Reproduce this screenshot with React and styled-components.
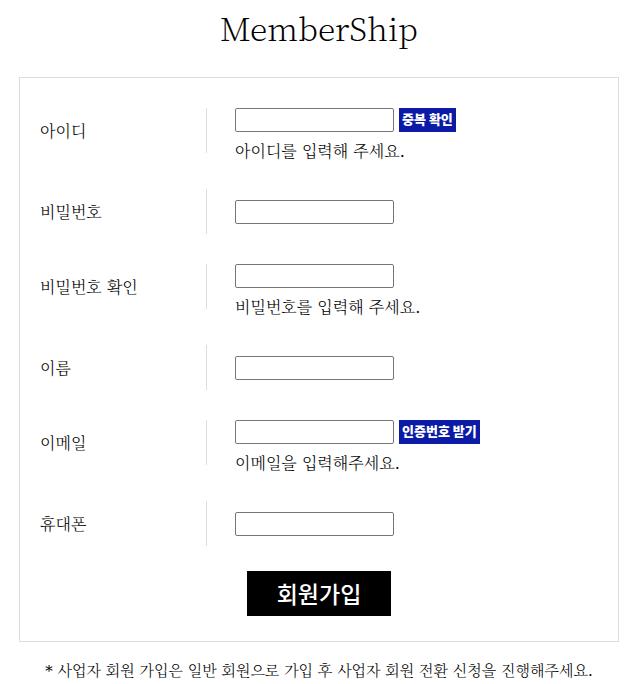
import React from 'react';
import styled, { createGlobalStyle } from 'styled-components';

const Global = createGlobalStyle`
  * { box-sizing: border-box; }
  body {
    margin: 0;
    background: #fff;
    color: #000;
    font-family: "DejaVu Serif", "Noto Serif CJK KR", "Noto Serif KR", serif;
    font-weight: 300;
    font-size: 16px;
  }
`;

const Page = styled.main`
  padding: 8px 16px 0 19px;
`;

const Title = styled.h1`
  margin: 0 0 31px;
  font-family: "Noto Serif CJK KR", "Noto Serif KR", serif;
  font-size: 32px;
  line-height: 38px;
  font-weight: 200;
  text-align: center;
`;

const Form = styled.form`
  border: 1px solid #ddd;
  padding: 15px 20px 25px;
`;

const Row = styled.div`
  display: grid;
  grid-template-columns: 167px 1fr;
  column-gap: 28px;
  padding: ${(p) => (p.$tall ? '15px 0 10px' : '15px 0')};
  align-items: start;
`;

const Label = styled.label`
  display: flex;
  align-items: center;
  height: 45px;
  padding-top: 2px;
  border-right: 1px solid #ddd;
  line-height: 24px;
`;

const Field = styled.div`
  display: flex;
  flex-direction: column;
  justify-content: ${(p) => (p.$tall ? 'flex-start' : 'center')};
  min-height: 45px;
`;

const Line = styled.div`
  display: flex;
  gap: 5px;
`;

const Input = styled.input`
  width: 159px;
  height: 24px;
  border: 1px solid #767676;
  border-radius: 2px;
  padding: 0 4px;
  background: #fff;
`;

const SmallButton = styled.button`
  height: 24px;
  padding: 0 3px 2px;
  border: 0;
  background: #0b1ba5;
  color: #fff;
  font: 900 13px/22px "Noto Sans CJK KR", sans-serif;
`;

const Hint = styled.p`
  margin: 8px 0 0;
  line-height: 24px;
`;

const Submit = styled.button`
  display: block;
  height: 45px;
  margin: 10px auto 0;
  padding: 0 30px;
  border: 0;
  background: #000;
  color: #fff;
  font: 500 23px/45px "Noto Sans CJK KR", sans-serif;
`;

const Note = styled.p`
  margin: 17px 0 0;
  font-size: 15px;
  line-height: 24px;
  text-align: center;
`;

const fields = [
  { id: 'userId', label: '아이디', action: '중복 확인', hint: '아이디를 입력해 주세요.' },
  { id: 'password', label: '비밀번호', type: 'password' },
  { id: 'passwordCheck', label: '비밀번호 확인', type: 'password', hint: '비밀번호를 입력해 주세요.' },
  { id: 'name', label: '이름' },
  { id: 'email', label: '이메일', type: 'email', action: '인증번호 받기', hint: '이메일을 입력해주세요.' },
  { id: 'phone', label: '휴대폰', type: 'tel' },
];

export default function App() {
  return (
    <Page>
      <Global />
      <Title>MemberShip</Title>
      <Form onSubmit={(e) => e.preventDefault()}>
        {fields.map(({ id, label, type = 'text', action, hint }) => (
          <Row key={id} $tall={Boolean(hint)}>
            <Label htmlFor={id}>{label}</Label>
            <Field $tall={Boolean(hint)}>
              <Line>
                <Input id={id} type={type} />
                {action && <SmallButton type="button">{action}</SmallButton>}
              </Line>
              {hint && <Hint>{hint}</Hint>}
            </Field>
          </Row>
        ))}
        <Submit type="submit">회원가입</Submit>
      </Form>
      <Note>* 사업자 회원 가입은 일반 회원으로 가입 후 사업자 회원 전환 신청을 진행해주세요.</Note>
    </Page>
  );
}
